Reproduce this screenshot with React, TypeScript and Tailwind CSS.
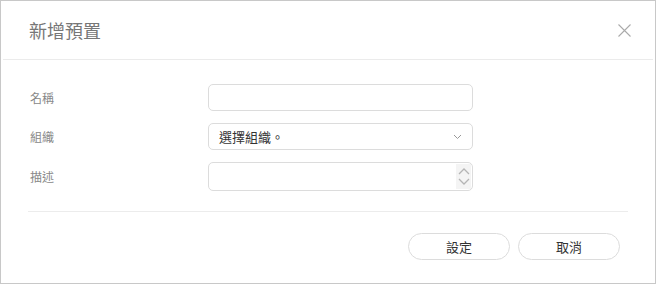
import React from "react";

const font = { fontFamily: '"Noto Sans CJK TC", "Noto Sans", sans-serif' };

function Field({ label, children }: { label: string; children: React.ReactNode }) {
  return (
    <div className="flex items-center">
      <div className="w-[207px] pl-[29px] text-[12px] text-[#888]">{label}</div>
      {children}
    </div>
  );
}

export default function App() {
  return (
    <div style={font} className="relative h-[284px] w-[656px] border border-[#c8c8c8] bg-white">
      {/* header */}
      <div className="mx-[2px] flex h-[59px] items-center justify-between border-b border-[#ebebeb] pl-[26px] pr-[22px]">
        <div className="text-[18px] leading-none text-[#777]">新增預置</div>
        <svg width="13" height="13" viewBox="0 0 13 13" className="text-[#aaa]">
          <path d="M0.5 0.5 L12.5 12.5 M12.5 0.5 L0.5 12.5" stroke="currentColor" strokeWidth="1.1" />
        </svg>
      </div>

      {/* body */}
      <div className="flex flex-col gap-[12px] pt-[24px]">
        <Field label="名稱">
          <input className="h-[27px] w-[265px] rounded-[5px] border border-[#dcdcdc] px-[10px] text-[13px] outline-none" />
        </Field>
        <Field label="組織">
          <div className="flex h-[27px] w-[265px] items-center justify-between rounded-[5px] border border-[#dcdcdc] pl-[10px] pr-[10px] text-[13px] text-[#333]">
            <span>選擇組織。</span>
            <svg width="9" height="6" viewBox="0 0 9 6" className="text-[#999]">
              <path d="M1 1 L4.5 4.5 L8 1" fill="none" stroke="currentColor" strokeWidth="1" />
            </svg>
          </div>
        </Field>
        <Field label="描述">
          <div className="flex h-[29px] w-[265px] items-stretch justify-end rounded-[5px] border border-[#dcdcdc]">
            <div className="my-[1px] mr-[1px] flex w-[15px] flex-col items-center justify-center gap-[3px] bg-[#f4f4f4]">
              <svg width="12" height="8" viewBox="0 0 12 8" className="text-[#b5b5b5]">
                <path d="M1 7 L6 2 L11 7" fill="none" stroke="currentColor" strokeWidth="1.3" />
              </svg>
              <svg width="12" height="8" viewBox="0 0 12 8" className="text-[#b5b5b5]">
                <path d="M1 1 L6 6 L11 1" fill="none" stroke="currentColor" strokeWidth="1.3" />
              </svg>
            </div>
          </div>
        </Field>
      </div>

      {/* footer */}
      <div className="mx-[27px] mt-[20px] border-t border-[#ececec]" />
      <div className="flex justify-end gap-[8px] pr-[35px] pt-[21px]">
        <button className="h-[27px] w-[102px] rounded-full border border-[#dcdcdc] bg-white text-[13px] text-[#333]">
          設定
        </button>
        <button className="h-[27px] w-[102px] rounded-full border border-[#dcdcdc] bg-white text-[13px] text-[#333]">
          取消
        </button>
      </div>
    </div>
  );
}
